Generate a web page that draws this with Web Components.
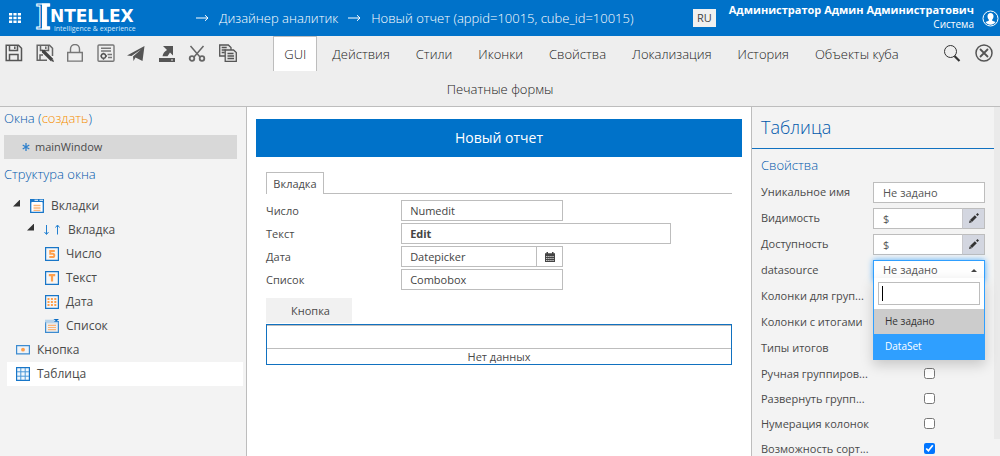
<!DOCTYPE html>
<html lang="ru">
<head>
<meta charset="utf-8">
<title>Intellex — Дизайнер аналитик</title>
<style>
  html, body { margin: 0; height: 100%; }
  body { font: 11px/16px "Open Sans", "Noto Sans", sans-serif; color: #4a4a4a; background: #fff; overflow: hidden; }
</style>
</head>
<body>
<designer-app></designer-app>

<script>
const ICONS = {
  grid: ['0 0 12 12', '<g fill="#fff"><path d="M0 1h3.2v2.6H0zM4.4 1h3.2v2.6H4.4zM8.8 1H12v2.6H8.800zM0 4.700h3.200v2.600H0zM4.400 4.700h3.200v2.600H4.400zM8.800 4.700H12v2.600H8.800zM0 8.400h3.200V11H0zM4.400 8.400h3.200V11H4.400zM8.800 8.400H12V11H8.800z"/></g>'],
  user: ['0 0 17 17', '<circle cx="8.500" cy="8.500" r="7.500" fill="none" stroke="#fff"/><path fill="#fff" d="M8.500 3c2 0 3 1.400 3 3.200 0 1.500-.6 2.600-1.300 3.300v1.200l3.300 1.300c-1.200 1.700-3 2.700-5 2.700s-3.800-1-5-2.700l3.300-1.300V9.500C6.100 8.800 5.500 7.700 5.500 6.200 5.500 4.400 6.500 3 8.500 3z"/>'],
  save: ['0 0 18 18', '<g fill="none" stroke="#555" stroke-width="1.500"><path d="M1.200 1.200h12.300l3 3v12.300H1.200z"/><path d="M4.500 1.500v5h8v-5M9.800 2.500v2.500M4.500 16.500v-6h8.500v6"/></g>'],
  saveAs: ['0 0 18 18', '<g fill="none" stroke="#666" stroke-width="1.500"><path d="M11 16.200H1.200V1.200h12.300l3 3V12"/><path d="M4.500 1.500v5h8v-5M9.800 2.500v2.500M4 16v-5h3"/></g><path d="M7 7l9 9" stroke="#444" stroke-width="3.200"/><path d="M5.500 5.500l3.500 1-2.500 2.500zM15 17l2-2 1 3z" fill="#444"/>'],
  lock: ['0 0 18 18', '<g fill="none" stroke="#777" stroke-width="1.400"><path d="M1.700 8.500h14.600v8.600H1.700z"/><path d="M4.500 8.500V5a4.500 4.500 0 0 1 9 0v3.500"/></g>'],
  cert: ['0 0 18 18', '<g fill="none" stroke="#777" stroke-width="1.400"><rect x="1" y="1" width="16" height="16.300" rx="1"/><path d="M4 4.200h10M4 7h10M10.500 10.500H15M11 13.500h4"/><circle cx="6.500" cy="12" r="2.200" stroke="#555"/><path d="M6.500 8.800v1M6.500 14.200v1.500M3.500 12h1M9 12h1" stroke="#555"/></g>'],
  send: ['0 0 18 18', '<path fill="#555" d="M0 11.500L17.500 2 15.500 17 8.500 13.500 6.500 17 6 12.500 14 5.500 4.500 12z"/>'],
  exportTo: ['0 0 18 18', '<path fill="#555" d="M1 14h16v4H1zM5 2h10v9.500l-3-3-2.500 3.800H4.500C5 9 6.500 7.500 9 6z"/><path d="M13 16h2" stroke="#eee"/>'],
  cut: ['0 0 18 18', '<g fill="none" stroke="#666" stroke-width="1.500"><path d="M2.500 2l9.500 11M15.500 2L6 13"/><circle cx="4" cy="14.500" r="2.300" stroke-width="1.800"/><circle cx="14" cy="14.500" r="2.300" stroke-width="1.800"/></g>'],
  copy: ['0 0 18 18', '<g fill="#e4e4e4" stroke="#555" stroke-width="1.300"><path d="M.7 1h8.600l2.700 2.500V12H.7z"/><path d="M2.700 3.500h5M2.700 6h4M2.700 8.500h3"/><path d="M6.200 6h8.300l2.800 2.500v8.800H6.200z"/><path d="M8.500 9.500h6M8.500 12h6.500M8.500 14.500h6.500"/></g>'],
  search: ['0 0 18 18', '<g fill="none" stroke="#333"><circle cx="7.500" cy="7.500" r="6"/><path d="M11.500 12l5 5" stroke-width="2.200"/></g>'],
  close: ['0 0 18 18', '<g fill="none" stroke="#555" stroke-width="1.500"><circle cx="9" cy="9" r="8"/><path d="M5 5l8 8M13 5l-8 8" stroke-width="1.800"/></g>'],
  star: ['0 0 8 8', '<path d="M4 0v8M.7 2l6.600 4M.7 6l6.600-4" stroke="#2f80cc" stroke-width="1.300"/>'],
  tabs: ['0 0 14 14', '<path d="M.7 1h12.600v12.300H.7z" fill="#fff" stroke="#1876c8" stroke-width="1.300"/><path d="M0 0h14v4H0z" fill="#1876c8"/><path d="M4.500.8h3.500v1H4.500zM9.500.8H13v1H9.500zM1.500 3h11v1h-11z" fill="#fff"/><path d="M3.500 6.500h7M3.500 9h7M3.500 11.300h7" stroke="#fbb577" stroke-width="1.300"/>'],
  tab: ['0 0 17 12', '<path d="M2.500 1v9M.5 8l2 2.500 2-2.500M13.500 10.500v-9M11.500 3.500l2-2.500 2 2.500" fill="none" stroke="#2380d0"/>'],
  text: ['0 0 14 14', '<path d="M.6.6h12.800v12.800H.6z" fill="#f6f6f6" stroke="#1876c8" stroke-width="1.200"/><path d="M3.800 4.200h6.400M7 4v6.500" stroke="#ffa04d" stroke-width="2.200"/>'],
  number: ['0 0 14 14', '<path d="M.6.6h12.800v12.800H.6z" fill="#f6f6f6" stroke="#1876c8" stroke-width="1.200"/><path d="M9.800 4H5.200v2.800h2.500a1.500 1.500 0 0 1 0 3.200H4.300" fill="none" stroke="#ffa04d" stroke-width="1.900"/>'],
  date: ['0 0 14 14', '<path d="M.6.6h12.800v12.800H.6z" fill="#f6f6f6" stroke="#1876c8" stroke-width="1.200"/><path d="M2.500 4h9M2.500 7h9M2.500 10h9" stroke="#ffa04d" stroke-width="2" stroke-dasharray="2 1.400"/>'],
  list: ['0 0 14 14', '<path d="M.6 2.600h12.800v10.800H.6z" fill="#eee" stroke="#3c8bd0" stroke-width="1.200"/><path d="M0 1h9v2H0zM.5 4h13" fill="#b5d3ec" stroke="#b5d3ec" stroke-width=".6"/><path d="M8.500 0H14l-2.700 2.500z" fill="#0a6dc4"/><path d="M3 6.300h8M3 8.500h8M3 10.700h8" stroke="#fbb577" stroke-width="1.200"/>'],
  button: ['0 0 14 14', '<path d="M.6 2.600h12.800v8.300H.6z" fill="#eef3f8" stroke="#3c8bd0" stroke-width="1.200"/><circle cx="7" cy="6.700" r="1.900" fill="#ff9f4a"/>'],
  table: ['0 0 14 14', '<path d="M.6.6h12.800v12.800H.6z" fill="#f2f8fd" stroke="#1876c8" stroke-width="1.200"/><path d="M4.800 1v12M9.200 1v12M1 4.800h12M1 9.200h12" stroke="#4b98d8"/>'],
  arrow: ['0 0 13 8', '<path d="M0 4h12M9 1.200L12 4 9 6.800" fill="none" stroke="#fff"/>'],
  calendar: ['0 0 10 10', '<path d="M0 1.200h1.500V0H3v1.200h4V0h1.500v1.200H10V10H0z" fill="#444"/><path d="M1 4.500h8M1 6.500h8M1 8.500h8" stroke="#fff" stroke-width=".7" stroke-dasharray="1.500 .6"/>'],
  pencil: ['0 0 10 10', '<path d="M2 8l4.800-4.800" stroke="#333" stroke-width="2.800"/><path d="M0 10l.7-2.800 2.200 2.100zM7 1.500L8.500 0 10 1.500 8.500 3z" fill="#333"/>'],
};

/* Base class: clones its template markup into an open shadow root. */
class View extends HTMLElement {
  connectedCallback() {
    if (this.shadowRoot) return;
    const tpl = document.createElement('template');
    tpl.innerHTML = '<style>*{box-sizing:border-box}</style>' + this.render();
    this.attachShadow({ mode: 'open' }).append(tpl.content.cloneNode(true));
  }
}

customElements.define('ui-icon', class extends View {
  render() {
    const [box, body] = ICONS[this.getAttribute('name')];
    const [, , w, h] = box.split(' ');
    return `<style>:host{display:inline-flex;flex:none}svg{display:block}</style>
      <svg width="${w}" height="${h}" viewBox="${box}" aria-hidden="true">${body}</svg>`;
  }
});

customElements.define('brand-logo', class extends View {
  render() {
    return `<style>
      :host{display:flex;align-items:flex-start;color:#fff;width:102px;height:32px}
      .cap{font:bold 34px/30px "DejaVu Serif",serif;margin-right:-1px;flex:none;color:transparent;
        background:linear-gradient(90deg,#0072c9 45%,#fff 45%);-webkit-background-clip:text;background-clip:text;-webkit-text-stroke:1px #fff}
      .rest{font:bold 17px/17px "DejaVu Sans",sans-serif;padding-top:6px}
      small{display:block;font:7px/8px "Open Sans",sans-serif;padding-left:4px;white-space:nowrap;color:#cfe6f8}
    </style><span class="cap">I</span><span class="rest">NTELLEX<small>intelligence &amp; experience</small></span>`;
  }
});

customElements.define('app-header', class extends View {
  render() {
    return `<style>
      :host{display:flex;align-items:center;height:36px;background:#0072c9;color:#fff;padding-left:9px}
      button{border:0;padding:0;background:none;color:inherit;font:inherit;display:flex}
      brand-logo{margin-left:14px}
      nav{display:flex;align-items:center;gap:10px;margin-left:59px;font-size:13px;font-weight:300;line-height:18px;white-space:nowrap;flex:1}
      a{color:#fff;text-decoration:none}
      .lang{background:#f0f0f0;color:#444;width:23px;height:18px;justify-content:center;align-items:center;font-size:11px;margin-right:13px}
      .who{text-align:right;font-size:10px;line-height:14px;white-space:nowrap;padding-bottom:4px}
      .who b{display:block;font-size:11px;line-height:15px}
      .me{margin:0 1px 0 8px}
    </style>
    <button aria-label="Меню"><ui-icon name="grid"></ui-icon></button>
    <brand-logo></brand-logo>
    <nav><ui-icon name="arrow"></ui-icon><a href="#">Дизайнер аналитик</a><ui-icon name="arrow"></ui-icon><a href="#">Новый отчет (appid=10015, cube_id=10015)</a></nav>
    <button class="lang">RU</button>
    <div class="who"><b>Администратор Админ Администратович</b>Система</div>
    <button class="me" aria-label="Профиль"><ui-icon name="user"></ui-icon></button>`;
  }
});

customElements.define('tool-bar', class extends View {
  render() {
    const tools = ['save', 'saveAs', 'lock', 'cert', 'send', 'exportTo', 'cut', 'copy'];
    const tabs = ['GUI', 'Действия', 'Стили', 'Иконки', 'Свойства', 'Локализация', 'История', 'Объекты куба', 'Печатные формы'];
    const btn = n => `<button class="t" aria-label="${n}"><ui-icon name="${n}"></ui-icon></button>`;
    return `<style>
      :host{display:block;background:#eee;border-bottom:1px solid #bdbdbd;text-align:center;font-size:13px;font-weight:300}
      .t{border:0;background:none;padding:0;display:flex}
      .left{float:left;display:flex;justify-content:space-between;width:240px;padding:8px 3px 0 5px}
      .right{float:right;display:flex;gap:14px;padding:8px 7px 0 0}
      .tab{display:inline-block;border:1px solid transparent;border-bottom:0;background:none;color:#222;font:inherit;line-height:18px;height:35px;padding:0 10px;margin:0 2px;vertical-align:top}
      .tab.on{background:#fff;border-color:#bdbdbd}
    </style>
    <div class="left">${tools.map(btn).join('')}</div>
    <div class="right">${btn('search')}${btn('close')}</div>
    ${tabs.map((t, i) => `<button class="tab${i ? '' : ' on'}">${t}</button>`).join('<wbr>')}`;
  }
});

customElements.define('tree-item', class extends View {
  render() {
    const open = this.hasAttribute('open');
    return `<style>
      :host{display:flex;align-items:center;height:24px;margin:0 3px 0 7px;padding-left:calc(9px + var(--indent,0px));font-size:12px}
      :host([selected]){background:#fff}
      i{width:7px;height:7px;background:#333;clip-path:polygon(100% 0,100% 100%,0 100%);margin:0 10px 6px -3px}
      a{color:inherit;text-decoration:none;margin-left:7px}
    </style>${open ? '<i></i>' : ''}<ui-icon name="${this.getAttribute('icon')}"></ui-icon><a href="#"><slot></slot></a>`;
  }
});

customElements.define('side-tree', class extends View {
  render() {
    const row = (icon, indent, text, extra = '') => `<tree-item icon="${icon}" style="--indent:${indent}px" ${extra}>${text}</tree-item>`;
    return `<style>
      :host{display:block;background:#f3f3f3;border-right:1px solid #bdbdbd;overflow:hidden}
      h2{margin:0;padding-left:4px;font-size:13px;line-height:20px;font-weight:300;color:#0058ab}
      h2 a{color:#f58e00;text-decoration:none}
      .win{display:flex;align-items:center;gap:5px;height:24px;margin:7px 9px 5px 4px;padding-left:18px;background:#d8d8d8;color:inherit;text-decoration:none}
      .top{padding-top:1px}
      .tree{padding-top:10px}
    </style>
    <h2 class="top">Окна (<a href="#">создать</a>)</h2>
    <a class="win" href="#"><ui-icon name="star"></ui-icon>mainWindow</a>
    <h2>Структура окна</h2>
    <div class="tree">
    ${row('tabs', 0, 'Вкладки', 'open')}${row('tab', 14, 'Вкладка', 'open')}
    ${row('number', 29, 'Число')}${row('text', 29, 'Текст')}${row('date', 29, 'Дата')}${row('list', 29, 'Список')}
    ${row('button', 0, 'Кнопка')}${row('table', 0, 'Таблица', 'selected')}</div>`;
  }
});

customElements.define('form-preview', class extends View {
  render() {
    return `<style>
      :host{display:block;padding:12px 9px 0;overflow:hidden}
      h1{margin:0;background:#0072c9;color:#fff;text-align:center;font-size:14px;line-height:38px;font-weight:400}
      .body{padding:15px 10px 0}
      .tabs{display:flex;border-bottom:1px solid #bdbdbd}
      .tabs button{font:inherit;color:inherit;background:#fff;border:1px solid #bdbdbd;border-bottom:0;height:22px;width:58px;padding:0;margin-bottom:-1px}
      .form{display:grid;grid-template-columns:29% 1fr;row-gap:2px;padding:6px 0 8px;align-items:center}
      input{font:inherit;color:#444;border:1px solid #bdbdbd;height:21px;padding:0 8px;width:162px}
      input.wide{width:270px;font-weight:bold}
      .date{display:flex;width:162px}
      .date input{flex:1;min-width:0}
      .date button{width:26px;height:21px;border:1px solid #bdbdbd;border-left:0;background:#fff;padding:0;display:flex;align-items:center;justify-content:center}
      .act{display:block;border:0;background:#f1f1f1;font:inherit;color:inherit;width:86px;height:25px;padding:0 0 0 3px}
      table{width:100%;border-collapse:separate;border-spacing:0;border:1px solid #1171c0;margin-top:1px}
      th{height:24px;padding:0;border-top:1px solid #bdbdbd;border-bottom:1px solid #bdbdbd}
      td{height:15px;padding:0;text-align:center;line-height:15px}
    </style>
    <h1>Новый отчет</h1>
    <div class="body">
      <div class="tabs"><button>Вкладка</button></div>
      <div class="form">
        <label for="n">Число</label><input id="n" value="Numedit">
        <label for="t">Текст</label><input id="t" class="wide" value="Edit">
        <label for="d">Дата</label><span class="date"><input id="d" value="Datepicker"><button aria-label="Календарь"><ui-icon name="calendar"></ui-icon></button></span>
        <label for="c">Список</label><input id="c" value="Combobox">
      </div>
      <button class="act">Кнопка</button>
      <table><thead><tr><th></th></tr></thead><tbody><tr><td>Нет данных</td></tr></tbody></table>
    </div>`;
  }
});

/* One line of the property grid: a label and its control. */
customElements.define('prop-row', class extends View {
  render() {
    const kind = this.getAttribute('kind'), label = this.getAttribute('label'), val = this.getAttribute('value') || '';
    const control = {
      text: `<input class="box" id="f" value="${val}">`,
      expr: `<input class="box" id="f" value="${val}"><button class="edit" aria-label="Изменить"><ui-icon name="pencil"></ui-icon></button>`,
      select: `<select class="box open" id="f"><option>${val}</option></select><b class="caret"></b><slot></slot>`,
      check: `<input type="checkbox" id="f" ${this.hasAttribute('on') ? 'checked' : ''}>`,
    }[kind];
    return `<style>
      :host{display:grid;grid-template-columns:minmax(0,1fr) 112px;align-items:center;height:26px;padding:0 9px}
      :host([kind=check]){height:25px}
      label{white-space:nowrap}
      .c{display:flex;position:relative;justify-content:center}
      .box{appearance:none;flex:1;min-width:0;height:21px;border:1px solid #bdbdbd;border-radius:0;background:#fff;font:inherit;color:#555;padding:0 9px;outline:0}
      .edit{width:23px;height:21px;border:1px solid #bdbdbd;border-left-color:#c8c8cc;margin-left:-1px;background:#d3d6e0;padding:0;display:flex;align-items:center;justify-content:center}
      .open{border-color:#2f9fff;box-shadow:0 0 6px #53aefb}
      .caret{position:absolute;right:8px;top:9px;border:3px solid transparent;border-top:0;border-bottom-color:#444}
      [type=checkbox]{width:11px;height:11px;margin:0}
      ::slotted(*){position:absolute;z-index:5;left:0;right:0;top:18px}
    </style><label for="f">${label}</label><span class="c">${control}</span>`;
  }
});

customElements.define('drop-list', class extends View {
  render() {
    return `<style>
      :host{display:block;background:#fff;border:1px solid #2f9fff;border-top:0;box-shadow:0 5px 12px rgba(0,0,0,.18)}
      .find{position:relative;padding:4px;display:flex}
      input{width:100%;height:23px;border:1px solid #bdbdbd;padding:0 6px;font:inherit;outline:0}
      .find i{position:absolute;left:8px;top:8px;height:15px;border-left:1px solid #000}
      button{display:block;width:100%;height:25px;border:0;padding:0 11px;text-align:left;font:inherit;font-size:10px;background:#ccc;color:#333}
      .on{background:#2f9fff;color:#fff}
    </style><div class="find"><input aria-label="Поиск"><i></i></div>
    <button>Не задано</button><button class="on">DataSet</button>`;
  }
});

customElements.define('property-panel', class extends View {
  render() {
    return `<style>
      :host{display:flex;background:#f3f3f3;border-left:1px solid #bdbdbd;overflow:hidden}
      .main{flex:1;min-width:0}
      .bar{width:6px;height:95%;background:#eaeaea}
      h2{margin:0;padding:0 9px;font-size:18px;line-height:41px;font-weight:300;color:#0058ab;border-bottom:1px solid #1171c0}
      h3{margin:0;padding:6px 9px 4px;font-size:13px;line-height:20px;font-weight:300;color:#0058ab}
    </style>
    <div class="main"><h2>Таблица</h2><h3>Свойства</h3>
      <prop-row kind="text" label="Уникальное имя" value="Не задано"></prop-row>
      <prop-row kind="expr" label="Видимость" value="$"></prop-row>
      <prop-row kind="expr" label="Доступность" value="$"></prop-row>
      <prop-row kind="select" label="datasource" value="Не задано"><drop-list></drop-list></prop-row>
      <prop-row kind="text" label="Колонки для груп..."></prop-row>
      <prop-row kind="text" label="Колонки с итогами"></prop-row>
      <prop-row kind="text" label="Типы итогов"></prop-row>
      <prop-row kind="check" label="Ручная группиров..."></prop-row>
      <prop-row kind="check" label="Развернуть групп..."></prop-row>
      <prop-row kind="check" label="Нумерация колонок"></prop-row>
      <prop-row kind="check" label="Возможность сорт..." on></prop-row>
    </div><div class="bar"></div>`;
  }
});

customElements.define('designer-app', class extends View {
  render() {
    return `<style>
      :host{display:flex;flex-direction:column;height:100vh}
      main{flex:1;min-height:0;display:grid;grid-template-columns:247px minmax(0,1fr) 249px}
    </style>
    <app-header></app-header><tool-bar></tool-bar>
    <main><side-tree></side-tree><form-preview></form-preview><property-panel></property-panel></main>`;
  }
});
</script>
</body>
</html>
